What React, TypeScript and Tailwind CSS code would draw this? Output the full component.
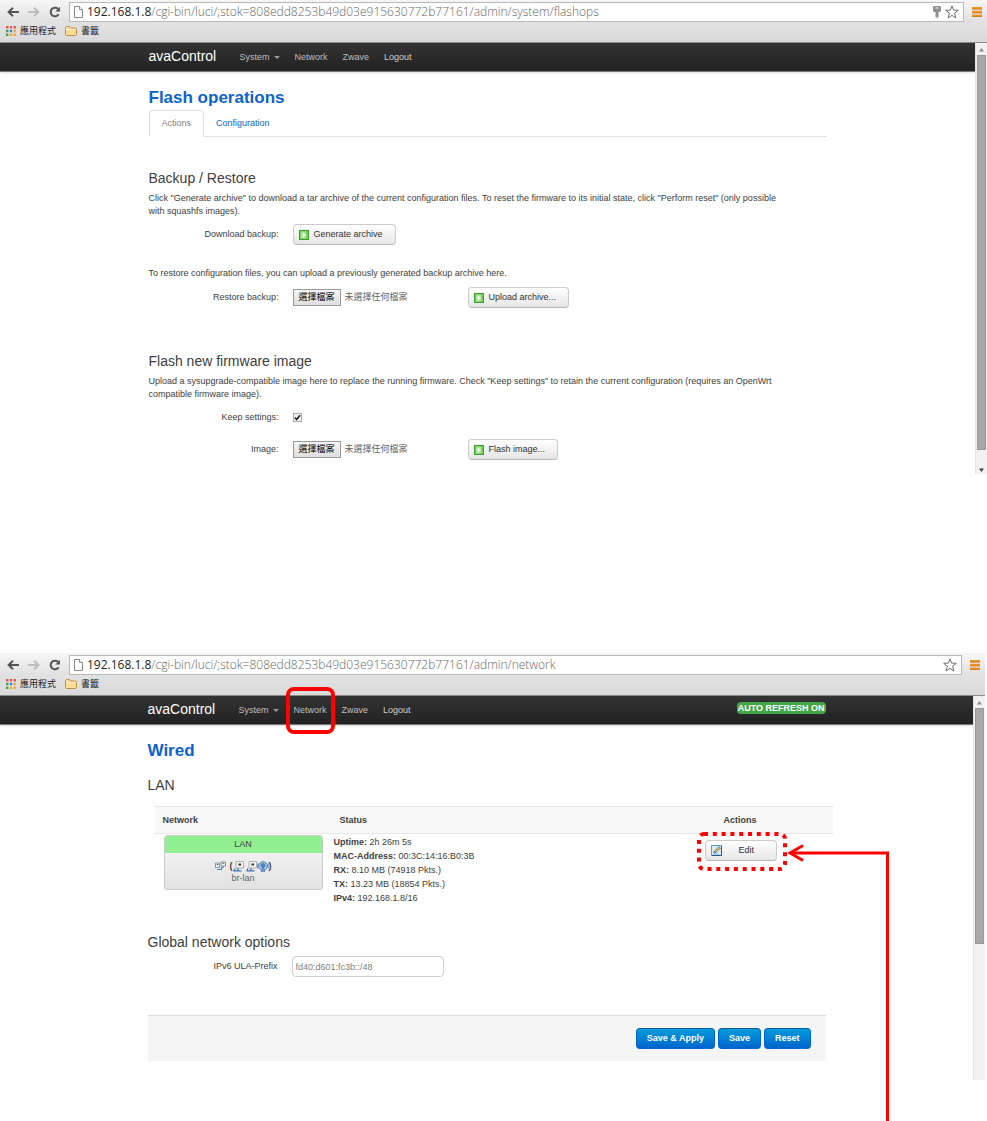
import { useState } from "react";
import type { ReactNode } from "react";

function BackIcon() {
  return (
    <svg viewBox="0 0 12 10" className="h-[10px] w-3" fill="none" stroke="currentColor" strokeWidth="2">
      <path d="M12 5H2M6 .8 1.6 5 6 9.2" />
    </svg>
  );
}

function ForwardIcon() {
  return (
    <svg viewBox="0 0 12 10" className="h-[10px] w-3" fill="none" stroke="currentColor" strokeWidth="2">
      <path d="M0 5h10M6 .8 10.400 5 6 9.200" />
    </svg>
  );
}

function ReloadIcon() {
  return (
    <svg viewBox="0 0 12 12" className="size-3" fill="none">
      <path d="M9.700 8.200A4.300 4.300 0 1 1 9 2.900" stroke="currentColor" strokeWidth="2" />
      <path d="M11 .8v4.700H6.400z" fill="currentColor" />
    </svg>
  );
}

function PageIcon() {
  return (
    <svg viewBox="0 0 9 12" className="h-3 w-[9px]" fill="#fff" stroke="#8a8a8a">
      <path d="M.5.5h5l3 3v8h-8z" />
      <path d="M5.500.5v3h3" />
    </svg>
  );
}

function KeyIcon() {
  return (
    <svg viewBox="0 0 8 12" className="h-3 w-2" fill="#8f8f8f">
      <path d="M1 0h6l1 1v4L7 6H5.500v5L4.500 12 2.500 11V6H1L0 5V1z" />
      <path d="M2.500 1.500h3v1h-3z" fill="#fff" />
    </svg>
  );
}

function StarIcon() {
  return (
    <svg viewBox="0 0 14 14" className="size-[14px]" fill="#fff" stroke="#6f6f6f" strokeLinejoin="round">
      <path d="m7 .9 1.600 4.200 4.700.2-3.700 2.900 1.300 4.800L7 10.400 3.100 13l1.300-4.800L.7 5.300l4.700-.2z" />
    </svg>
  );
}

function MenuIcon() {
  return (
    <svg viewBox="0 0 10 10" className="size-[10px]">
      <path d="M0 0h10v2.500H0zM0 3.800h10v2.500H0zM0 7.500h10V10H0z" fill="#f0952e" />
      <path d="M0 2h10M0 5.800h10M0 9.500h10" stroke="#c97a1e" strokeWidth=".8" />
    </svg>
  );
}

function AppsIcon() {
  return (
    <svg viewBox="0 0 10 10" className="size-[10px]">
      <path d="M0 0h2.400v2.400H0zM3.800 0h2.400v2.400H3.800zM7.600 0H10v2.400H7.600z" fill="#e2574c" />
      <path d="M0 3.800h2.400v2.400H0z" fill="#3fa45b" />
      <path d="M3.800 3.800h2.400v2.400H3.800z" fill="#3b7ddd" />
      <path d="M7.600 3.800H10v2.400H7.600z" fill="#f0a830" />
      <path d="M0 7.600h2.400V10H0z" fill="#3fa45b" />
      <path d="M3.800 7.600h2.400V10H3.800zM7.600 7.600H10V10H7.600z" fill="#f0a830" />
    </svg>
  );
}

function FolderIcon() {
  return (
    <svg viewBox="0 0 12 10" className="h-[10px] w-3" fill="#fbdc94" stroke="#b98a3c" strokeWidth=".9">
      <path d="M.5 8.500v-7l1-1h3l1 1.500h5l1 1v5.500l-1 1h-9z" />
      <path d="M1 3.500h10" stroke="#fff1cc" />
    </svg>
  );
}

function RunIcon() {
  return (
    <svg viewBox="0 0 10 10" className="size-[10px]">
      <path d="M0 0h10v10H0z" fill="#3c9a2c" />
      <path d="M1 1h8v8H1z" fill="#7bd05f" />
      <path d="M2 1.500h5v7H2z" fill="#a5e592" />
      <path d="M3.800 2.500v5L7 5z" fill="#fff" />
    </svg>
  );
}

function EditIcon() {
  return (
    <svg viewBox="0 0 11 11" className="size-[11px]">
      <path d="M.5.5h10v10H.5z" fill="#d3ecf9" stroke="#5f9cc4" />
      <path d="M10.500 1v9.500H1" fill="none" stroke="#24567f" />
      <path d="M2 7h3M2 9h6" stroke="#79c0e6" />
      <path d="m3 8 .6-2L8 1.700 9.400 3 5 7.400z" fill="#e9bd4c" stroke="#4b5560" strokeWidth=".7" />
    </svg>
  );
}

function BridgeIcon() {
  return (
    <svg viewBox="0 0 11 10" className="h-[10px] w-[11px]" strokeWidth=".8">
      <path d="M.5 2h4v4.500h-4zM6 1h4.500v4H6z" fill="#eef3f8" stroke="#6b7f95" />
      <path d="M1.700 3.500h1.600M7.300 2.300h1.900" stroke="#333" />
      <path d="M2 8.500h4.500V6.500L9 6" fill="none" stroke="#4d7fb5" strokeWidth="1.200" />
    </svg>
  );
}

function EthernetIcon() {
  return (
    <svg viewBox="0 0 11 11" className="size-[11px]" strokeWidth=".8">
      <path d="M3 .5h7.500v6.500H3z" fill="#f3f3ea" stroke="#9aa3ab" />
      <path d="M5.500 2.500h2.500v2H5.500z" fill="#333" />
      <path d="M.5 9.800h8M2 7.500 1 9.500M5 7.200v2.300" fill="none" stroke="#3f76b0" strokeWidth="1.300" />
    </svg>
  );
}

function WifiIcon() {
  return (
    <svg viewBox="0 0 12 11" className="h-[11px] w-3" fill="none" stroke="#4f83bd">
      <circle cx="6" cy="5" r="4.300" fill="#a9c9ea" />
      <circle cx="6" cy="4.500" r="2" fill="#4f83bd" />
      <path d="M.8 2.500v5M11.200 2.500v5M4 10.300l2-4 2 4z" />
    </svg>
  );
}

function Toolbar({ path, withKey }: { path: string; withKey?: boolean }) {
  return (
    <header className="h-[43px] border-b border-[#8c8c8c] bg-linear-to-b from-[#f6f6f6] via-[#e2e2e2] to-[#dadada] pt-0.5">
      <div className="flex h-5 items-center pl-[7px] pr-[5px] text-[#555]">
        <button type="button" aria-label="Back"><BackIcon /></button>
        <button type="button" aria-label="Forward" className="ml-[9px] text-[#bdbdbd]"><ForwardIcon /></button>
        <button type="button" aria-label="Reload" className="ml-[9px]"><ReloadIcon /></button>
        <div className="ml-2 flex h-5 min-w-0 flex-1 items-center border border-[#b9b9b9] bg-white px-1">
          <PageIcon />
          <div className="ml-1 flex-1 truncate font-['Open_Sans',sans-serif] text-[12px] leading-[18px] text-[#666]">
            <span className="text-[#222]">192.168.1.8</span>
            <span className="font-light">{path}</span>
          </div>
          <div className="flex items-center gap-1">
            {withKey && <KeyIcon />}
            <StarIcon />
          </div>
        </div>
        <button type="button" aria-label="Menu" className="ml-2"><MenuIcon /></button>
      </div>
      <div className="flex h-[18px] items-center gap-[9px] pl-1.5 text-[9px] text-[#222]">
        <a href="#" className="flex items-center gap-1"><AppsIcon />應用程式</a>
        <a href="#" className="flex items-center gap-1"><FolderIcon />書籤</a>
      </div>
    </header>
  );
}

function Scrollbar({ children }: { children: ReactNode }) {
  return (
    <div className="flex w-3 shrink-0 flex-col border-l border-[#e4e4e4] bg-[#f1f1f1]">
      <svg viewBox="0 0 11 12" className="h-3 w-[11px]"><path d="M3 8.500 5.500 5 8 8.500z" fill="#8a8a8a" /></svg>
      {children}
    </div>
  );
}

function Navbar({ badge, highlightNetwork }: { badge?: string; highlightNetwork?: boolean }) {
  return (
    <nav className="h-[29px] border-b border-[#777] bg-linear-to-b from-[#333] to-[#222] shadow-sm">
      <div className="mx-auto flex h-full max-w-[678px] items-center text-[#bfbfbf]">
        <a href="#" className="w-[91px] pb-0.5 text-[14px] text-white">avaControl</a>
        <div className="flex items-center gap-[15px]">
          <a href="#" className="flex items-center gap-1">
            System
            <span className="border-x-[3px] border-t-[3px] border-x-transparent border-t-[#999]" />
          </a>
          <a href="#" className="relative">
            Network
            {highlightNetwork && (
              <span className="absolute -inset-x-2 -top-[17px] h-[47px] rounded-lg border-4 border-[#f00]" />
            )}
          </a>
          <a href="#">Zwave</a>
          <a href="#" className="text-[#d0d0d0]">Logout</a>
        </div>
        {badge && (
          <span className="mb-1 ml-auto rounded-sm bg-[#46a546] px-px font-bold leading-3 text-white">{badge}</span>
        )}
      </div>
    </nav>
  );
}

function Button({ icon, children, className = "gap-[5px] pr-3" }: { icon: ReactNode; children: ReactNode; className?: string }) {
  return (
    <button
      type="button"
      className={`flex h-[21px] items-center rounded-sm border border-[#ccc] border-b-[#b5b5b5] bg-linear-to-b from-white to-[#e6e6e6] pl-[5px] text-[#333] ${className}`}
    >
      {icon}
      {children}
    </button>
  );
}

function PrimaryButton({ children }: { children: ReactNode }) {
  return (
    <button
      type="button"
      className="h-[21px] rounded-sm border border-[#0064cd] border-t-[#0a5a9c] bg-linear-to-b from-[#049cdb] to-[#0064cd] px-2.5 font-bold text-white"
    >
      {children}
    </button>
  );
}

function FormRow({ label, htmlFor, children }: { label: string; htmlFor?: string; children: ReactNode }) {
  return (
    <div className="flex h-[21px] items-center">
      <label htmlFor={htmlFor} className="w-[130px] text-right">{label}</label>
      <div className="ml-[14px] flex flex-1 items-center">{children}</div>
    </div>
  );
}

function FilePicker({ id }: { id: string }) {
  return (
    <div className="flex w-[175px] items-center gap-1">
      <label htmlFor={id} className="border border-[#999] bg-linear-to-b from-[#f6f6f6] to-[#dedede] px-[5px] leading-[15px] text-black">
        選擇檔案
      </label>
      <input id={id} type="file" className="sr-only" />
      <span className="text-[#666]">未選擇任何檔案</span>
    </div>
  );
}

function FlashPage() {
  const [keep, setKeep] = useState(true);

  return (
    <main className="mx-auto max-w-[678px] pb-[14px] pt-4">
      <h2 className="text-[17px] font-bold leading-5 text-[#0b63ce]">Flash operations</h2>
      <div className="mt-0.5 flex h-[27px] border-b border-[#e2e2e2]">
        <a href="#" className="-mb-px rounded-t border border-[#ddd] border-b-white bg-white px-3 leading-[25px] text-[#808080]">
          Actions
        </a>
        <a href="#" className="px-3 leading-[27px] text-[#0b63ce]">Configuration</a>
      </div>

      <h3 className="mt-[31px] text-[14px] leading-5">Backup / Restore</h3>
      <p className="mt-1 pr-10">
        Click "Generate archive" to download a tar archive of the current configuration files. To reset the firmware to
        its initial state, click "Perform reset" (only possible with squashfs images).
      </p>
      <div className="mt-1.5">
        <FormRow label="Download backup:">
          <Button icon={<RunIcon />}>Generate archive</Button>
        </FormRow>
      </div>
      <p className="mt-[22px]">
        To restore configuration files, you can upload a previously generated backup archive here.
      </p>
      <div className="mt-[7px]">
        <FormRow label="Restore backup:" htmlFor="archive">
          <FilePicker id="archive" />
          <Button icon={<RunIcon />}>Upload archive...</Button>
        </FormRow>
      </div>

      <h3 className="mt-[43px] text-[14px] leading-5">Flash new firmware image</h3>
      <p className="mt-1 pr-10">
        Upload a sysupgrade-compatible image here to replace the running firmware. Check "Keep settings" to retain the
        current configuration (requires an OpenWrt compatible firmware image).
      </p>
      <div className="mt-1.5 flex flex-col gap-[11px]">
        <FormRow label="Keep settings:" htmlFor="keep">
          <span className="relative size-[9px]">
            <input
              id="keep"
              type="checkbox"
              checked={keep}
              onChange={(e) => setKeep(e.target.checked)}
              className="block size-[9px] appearance-none border border-[#aaa] bg-[#eee]"
            />
            {keep && (
              <svg viewBox="0 0 9 9" className="pointer-events-none absolute inset-0" fill="none" stroke="#222" strokeWidth="1.600">
                <path d="m2 4.500 1.700 2L7 2.200" />
              </svg>
            )}
          </span>
        </FormRow>
        <FormRow label="Image:" htmlFor="image">
          <FilePicker id="image" />
          <Button icon={<RunIcon />}>Flash image...</Button>
        </FormRow>
      </div>
    </main>
  );
}

const status = [
  ["Uptime:", "2h 26m 5s"],
  ["MAC-Address:", "00:3C:14:16:B0:3B"],
  ["RX:", "8.10 MB (74918 Pkts.)"],
  ["TX:", "13.23 MB (18854 Pkts.)"],
  ["IPv4:", "192.168.1.8/16"],
];

function EditCallout() {
  return (
    <>
      <svg viewBox="0 0 90 39" className="pointer-events-none absolute -left-2 -top-2 h-[39px] w-[90px]" fill="none">
        <rect x="2" y="2" width="86" height="35" rx="5" stroke="#f00" strokeWidth="4" strokeDasharray="4 4.800" />
      </svg>
      <svg viewBox="0 0 102 279" className="pointer-events-none absolute left-[83px] top-1 h-[279px] w-[102px]" fill="none" stroke="#f00" strokeWidth="3">
        <path d="M2 9h97.500v270" />
        <path d="M15 1.500 2 9l13 7.500" />
      </svg>
    </>
  );
}

function NetworkPage() {
  return (
    <main className="mx-auto max-w-[678px] pb-[19px] pt-4">
      <h2 className="text-[17px] font-bold leading-5 text-[#0b63ce]">Wired</h2>
      <h3 className="mt-[14px] text-[14px] leading-5">LAN</h3>
      <table className="relative left-[7px] mt-[11px] w-full table-fixed text-left">
        <colgroup>
          <col className="w-[172px]" />
          <col />
          <col className="w-[136px]" />
        </colgroup>
        <thead>
          <tr className="h-[27px] border-y border-[#e6e6e6] bg-[#f9f9f9]">
            <th className="pl-2">Network</th>
            <th className="pl-[13px]">Status</th>
            <th className="pl-[27px]">Actions</th>
          </tr>
        </thead>
        <tbody>
          <tr className="align-top">
            <td className="pl-[9px] pr-1 pt-px">
              <div className="overflow-hidden rounded-[3px] border border-[#ccc] bg-linear-to-b from-[#f8f8f8] to-[#e2e2e2] text-center">
                <div className="bg-[#90f090] leading-[17px]">LAN</div>
                <div className="h-9 pt-[7px] leading-3">
                  <div className="flex items-center justify-center">
                    <BridgeIcon />
                    <b className="ml-1">(</b>
                    <EthernetIcon />
                    <span className="w-0.5" />
                    <EthernetIcon />
                    <WifiIcon />
                    <b>)</b>
                  </div>
                  <div className="text-[#666]">br-lan</div>
                </div>
              </div>
            </td>
            <td className="pl-[7px] pt-px leading-[14px]">
              {status.map(([name, value]) => (
                <div key={name}>
                  <b>{name}</b> {value}
                </div>
              ))}
            </td>
            <td className="pl-2 pt-1.5">
              <div className="relative w-[72px]">
                <Button icon={<EditIcon />} className="w-full gap-[17px]">Edit</Button>
                <EditCallout />
              </div>
            </td>
          </tr>
        </tbody>
      </table>

      <h3 className="mt-[27px] text-[14px] leading-5">Global network options</h3>
      <div className="mt-1">
        <FormRow label="IPv6 ULA-Prefix" htmlFor="ula">
          <input
            id="ula"
            type="text"
            defaultValue="fd40:d601:fc3b::/48"
            className="h-[21px] w-[152px] rounded-sm border border-[#ccc] bg-white px-[3px] text-[#808080]"
          />
        </FormRow>
      </div>

      <div className="mt-[38px] flex justify-end gap-[3px] border-t border-[#ddd] bg-[#f5f5f5] py-3 pr-[15px]">
        <PrimaryButton>Save &amp; Apply</PrimaryButton>
        <PrimaryButton>Save</PrimaryButton>
        <PrimaryButton>Reset</PrimaryButton>
      </div>
    </main>
  );
}

export default function App() {
  return (
    <div className="min-h-screen bg-white font-['Liberation_Sans','Noto_Sans_CJK_TC',sans-serif] text-[9px] leading-[13px] text-[#404040]">
      <section>
        <Toolbar path="/cgi-bin/luci/;stok=808edd8253b49d03e915630772b77161/admin/system/flashops" withKey />
        <div className="flex">
          <div className="min-w-0 flex-1">
            <Navbar />
            <FlashPage />
          </div>
          <Scrollbar>
            <div className="mx-px flex-1 border border-[#999] bg-[#a8a8a8]" />
            <svg viewBox="0 0 11 24" className="h-6 w-[11px]"><path d="M3 18.500h5L5.500 22z" fill="#444" /></svg>
          </Scrollbar>
        </div>
      </section>

      <section className="mr-0.5 mt-[179px]">
        <Toolbar path="/cgi-bin/luci/;stok=808edd8253b49d03e915630772b77161/admin/network" />
        <div className="flex">
          <div className="min-w-0 flex-1">
            <Navbar badge="AUTO REFRESH ON" highlightNetwork />
            <NetworkPage />
          </div>
          <Scrollbar>
            <div className="mx-px h-[236px] border border-[#999] bg-[#a8a8a8]" />
          </Scrollbar>
        </div>
      </section>
    </div>
  );
}
